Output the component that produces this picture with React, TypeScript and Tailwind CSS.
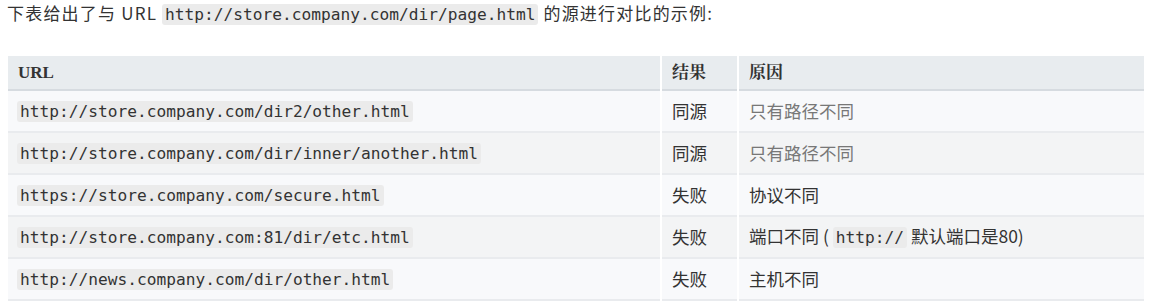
const rows = [
  { url: "http://store.company.com/dir2/other.html", result: "同源", reason: <span className="text-[#777]">只有路径不同</span> },
  { url: "http://store.company.com/dir/inner/another.html", result: "同源", reason: <span className="text-[#777]">只有路径不同</span> },
  { url: "https://store.company.com/secure.html", result: "失败", reason: "协议不同" },
  {
    url: "http://store.company.com:81/dir/etc.html",
    result: "失败",
    reason: (
      <>
        端口不同 ( <Code>http://</Code> 默认端口是80)
      </>
    ),
  },
  { url: "http://news.company.com/dir/other.html", result: "失败", reason: "主机不同" },
];

const mono = "font-['DejaVu_Sans_Mono','Liberation_Mono',monospace]";

function Code({ children }: { children: React.ReactNode }) {
  return (
    <code className={`${mono} text-[16.2px] tracking-normal bg-[#ebebeb] rounded-[3px] px-[3px] py-[1px] text-[#333]`}>
      {children}
    </code>
  );
}

export default function App() {
  return (
    <div className="bg-white w-[1152px] h-[307px] overflow-hidden text-[#333] font-['Microsoft_YaHei','Noto_Sans_CJK_SC',sans-serif] text-[16px]">
      <p className="pl-[7px] pt-[2px] leading-[22px] text-[17px] tracking-[1.2px]">
        下表给出了与 URL <Code>http://store.company.com/dir/page.html</Code> 的源进行对比的示例:
      </p>
      <table className="ml-[8px] mt-[30px] w-[1136px] border-collapse">
        <thead>
          <tr className="bg-[#e8ecef] border-b-2 border-[#d6dbe0] font-['Liberation_Serif','Noto_Serif_CJK_SC',serif] text-[17px] font-bold text-[#333]">
            <th className="w-[653px] h-[34px] text-left pl-[10px] border-r-2 border-white">URL</th>
            <th className="w-[77px] text-left pl-[10px] border-r-2 border-white">结果</th>
            <th className="text-left pl-[10px]">原因</th>
          </tr>
        </thead>
        <tbody>
          {rows.map((r, i) => (
            <tr
              key={i}
              className={`h-[42px] border-b-2 border-[#e9ebee] ${i % 2 === 0 ? "bg-[#f8f9fb]" : "bg-[#f3f4f5]"}`}
            >
              <td className="pl-[9px] border-r-2 border-white">
                <Code>{r.url}</Code>
              </td>
              <td className="pl-[10px] border-r-2 border-white text-[17.5px]">{r.result}</td>
              <td className="pl-[10px] text-[17.5px]">{r.reason}</td>
            </tr>
          ))}
        </tbody>
      </table>
    </div>
  );
}
